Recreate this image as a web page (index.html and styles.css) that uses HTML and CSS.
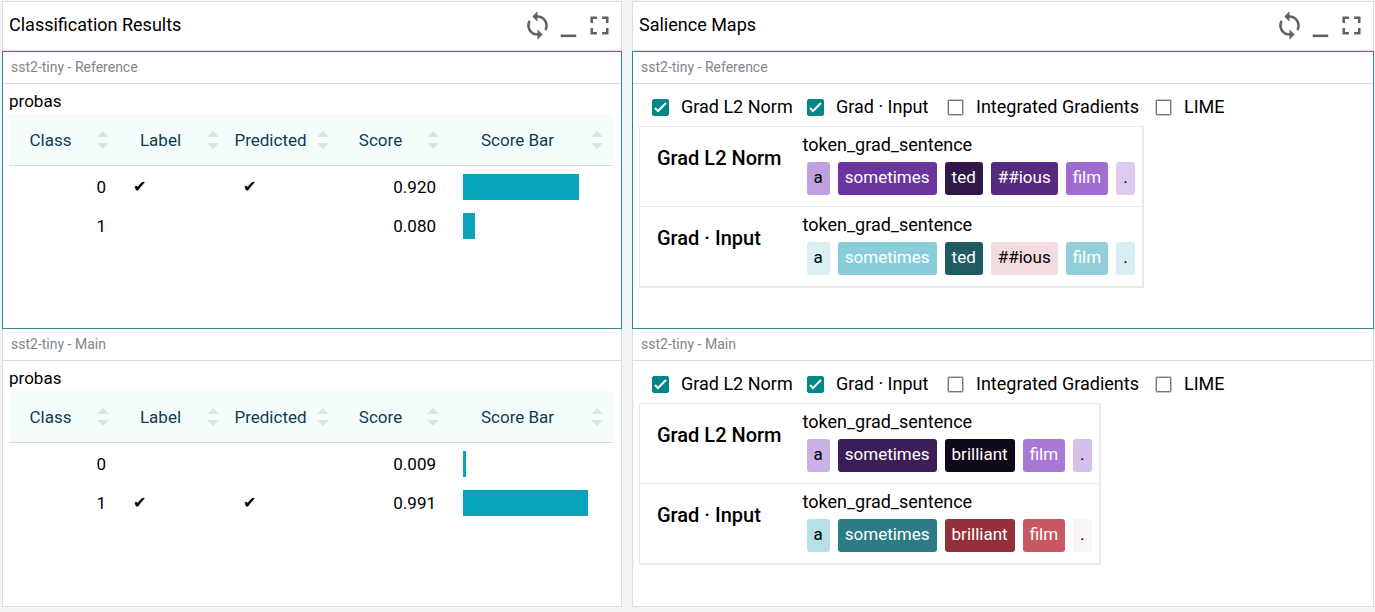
FILE: index.html
```html
<!DOCTYPE html>
<html lang="en">
<head>
<meta charset="utf-8">
<title>Classification Results and Salience Maps</title>
<link rel="stylesheet" href="styles.css">
</head>
<body>
<svg class="defs" aria-hidden="true">
  <symbol id="sync" viewBox="0 0 24 24"><path d="M12 4V1L8 5l4 4V6c3.31 0 6 2.69 6 6 0 1.01-.25 1.97-.7 2.8l1.46 1.46C19.54 15.03 20 13.57 20 12c0-4.42-3.58-8-8-8zm0 14c-3.31 0-6-2.69-6-6 0-1.01.25-1.97.7-2.8L5.24 7.74C4.46 8.97 4 10.43 4 12c0 4.42 3.58 8 8 8v3l4-4-4-4v3z"/></symbol>
  <symbol id="minimize" viewBox="0 0 24 24"><path d="M6 19h12v2H6z"/></symbol>
  <symbol id="fullscreen" viewBox="0 0 24 24"><path d="M7 14H5v5h5v-2H7v-3zm-2-4h2V7h3V5H5v5zm12 7h-3v2h5v-5h-2v3zM14 5v2h3v3h2V5h-5z"/></symbol>
  <symbol id="sort" viewBox="0 0 12 18"><path d="M6 0l6 6H0zM0 12h12l-6 6z"/></symbol>
</svg>
<main class="modules">
  <section class="module">
    <header class="module-header">
      <h2 class="module-title">Classification Results</h2>
      <div class="actions">
        <button class="icon-button" type="button" aria-label="Sync"><svg class="icon"><use href="#sync"/></svg></button>
        <button class="icon-button" type="button" aria-label="Minimize"><svg class="icon"><use href="#minimize"/></svg></button>
        <button class="icon-button" type="button" aria-label="Full screen"><svg class="icon"><use href="#fullscreen"/></svg></button>
      </div>
    </header>
    <div class="pane pane-selected">
      <h3 class="pane-title">sst2-tiny - Reference</h3>
      <div class="results">
        <div class="field-name">probas</div>
        <table class="scores">
          <thead><tr>
            <th><div class="head">Class<svg class="sort"><use href="#sort"/></svg></div></th>
            <th><div class="head">Label<svg class="sort"><use href="#sort"/></svg></div></th>
            <th><div class="head">Predicted<svg class="sort"><use href="#sort"/></svg></div></th>
            <th><div class="head">Score<svg class="sort"><use href="#sort"/></svg></div></th>
            <th class="bar-column"><div class="head">Score Bar<svg class="sort"><use href="#sort"/></svg></div></th>
          </tr></thead>
          <tbody>
            <tr><td class="number">0</td><td class="tick">✔</td><td class="tick">✔</td><td class="number">0.920</td><td><div class="bar" style="width: 116px"></div></td></tr>
            <tr><td class="number">1</td><td></td><td></td><td class="number">0.080</td><td><div class="bar" style="width: 12px"></div></td></tr>
          </tbody>
        </table>
      </div>
    </div>
    <div class="pane">
      <h3 class="pane-title">sst2-tiny - Main</h3>
      <div class="results">
        <div class="field-name">probas</div>
        <table class="scores">
          <thead><tr>
            <th><div class="head">Class<svg class="sort"><use href="#sort"/></svg></div></th>
            <th><div class="head">Label<svg class="sort"><use href="#sort"/></svg></div></th>
            <th><div class="head">Predicted<svg class="sort"><use href="#sort"/></svg></div></th>
            <th><div class="head">Score<svg class="sort"><use href="#sort"/></svg></div></th>
            <th class="bar-column"><div class="head">Score Bar<svg class="sort"><use href="#sort"/></svg></div></th>
          </tr></thead>
          <tbody>
            <tr><td class="number">0</td><td></td><td></td><td class="number">0.009</td><td><div class="bar" style="width: 3px"></div></td></tr>
            <tr><td class="number">1</td><td class="tick">✔</td><td class="tick">✔</td><td class="number">0.991</td><td><div class="bar" style="width: 125px"></div></td></tr>
          </tbody>
        </table>
      </div>
    </div>
  </section>

  <section class="module">
    <header class="module-header">
      <h2 class="module-title">Salience Maps</h2>
      <div class="actions">
        <button class="icon-button" type="button" aria-label="Sync"><svg class="icon"><use href="#sync"/></svg></button>
        <button class="icon-button" type="button" aria-label="Minimize"><svg class="icon"><use href="#minimize"/></svg></button>
        <button class="icon-button" type="button" aria-label="Full screen"><svg class="icon"><use href="#fullscreen"/></svg></button>
      </div>
    </header>
    <div class="pane pane-selected">
      <h3 class="pane-title">sst2-tiny - Reference</h3>
      <div class="salience">
        <div class="methods">
          <label class="method"><span class="check"><input class="box" type="checkbox" checked><svg class="mark" viewBox="0 0 17 17"><path d="M3 9l3 3 8-8"/></svg></span>Grad L2 Norm</label>
          <label class="method"><span class="check"><input class="box" type="checkbox" checked><svg class="mark" viewBox="0 0 17 17"><path d="M3 9l3 3 8-8"/></svg></span>Grad · Input</label>
          <label class="method"><span class="check"><input class="box" type="checkbox"></span>Integrated Gradients</label>
          <label class="method"><span class="check"><input class="box" type="checkbox"></span>LIME</label>
        </div>
        <table class="maps">
          <tr><th class="map-name" scope="row">Grad L2 Norm</th><td class="map">
            <div class="token-field">token_grad_sentence</div>
            <div class="tokens"><span class="token lilac">a</span><span class="token violet">sometimes</span><span class="token aubergine">ted</span><span class="token indigo">##ious</span><span class="token orchid">film</span><span class="token mauve">.</span></div>
          </td></tr>
          <tr><th class="map-name" scope="row">Grad · Input</th><td class="map">
            <div class="token-field">token_grad_sentence</div>
            <div class="tokens"><span class="token ice">a</span><span class="token aqua">sometimes</span><span class="token deep-teal">ted</span><span class="token blush">##ious</span><span class="token light-aqua">film</span><span class="token frost">.</span></div>
          </td></tr>
        </table>
      </div>
    </div>
    <div class="pane">
      <h3 class="pane-title">sst2-tiny - Main</h3>
      <div class="salience">
        <div class="methods">
          <label class="method"><span class="check"><input class="box" type="checkbox" checked><svg class="mark" viewBox="0 0 17 17"><path d="M3 9l3 3 8-8"/></svg></span>Grad L2 Norm</label>
          <label class="method"><span class="check"><input class="box" type="checkbox" checked><svg class="mark" viewBox="0 0 17 17"><path d="M3 9l3 3 8-8"/></svg></span>Grad · Input</label>
          <label class="method"><span class="check"><input class="box" type="checkbox"></span>Integrated Gradients</label>
          <label class="method"><span class="check"><input class="box" type="checkbox"></span>LIME</label>
        </div>
        <table class="maps">
          <tr><th class="map-name" scope="row">Grad L2 Norm</th><td class="map">
            <div class="token-field">token_grad_sentence</div>
            <div class="tokens"><span class="token lavender">a</span><span class="token plum">sometimes</span><span class="token midnight">brilliant</span><span class="token amethyst">film</span><span class="token thistle">.</span></div>
          </td></tr>
          <tr><th class="map-name" scope="row">Grad · Input</th><td class="map">
            <div class="token-field">token_grad_sentence</div>
            <div class="tokens"><span class="token sky">a</span><span class="token teal">sometimes</span><span class="token crimson">brilliant</span><span class="token rose">film</span><span class="token petal">.</span></div>
          </td></tr>
        </table>
      </div>
    </div>
  </section>
</main>
</body>
</html>
```
FILE: styles.css
```css
* { box-sizing: border-box; }
body {
  margin: 0;
  background: #f1f3f4;
  color: #000;
  font: 17px/24px Roboto, "Liberation Sans", sans-serif;
}
.defs { display: none; }
.modules {
  display: grid;
  grid-template-columns: 620fr 742fr;
  gap: 10px;
  min-height: 100vh;
  padding: 1px 1px 5px 2px;
}
.module { display: grid; grid-template-rows: 50px 1fr 1fr; min-width: 0; }
.module-header {
  display: flex;
  align-items: center;
  justify-content: space-between;
  padding: 0 6px 2px;
  background: #fff;
  border: 1px solid #dadce0;
}
.module-title { margin: 0; font-size: 18px; font-weight: 400; }
.actions { display: flex; }
.icon-button { display: flex; padding: 0; border: 0; background: none; color: #5f6368; }
.icon { width: 31px; height: 31px; fill: currentColor; }

.pane {
  min-width: 0;
  background: #fff;
  border: 1px solid #dadce0;
  border-top: 0;
}
.pane-selected { border: 1px solid #2b8c92; }
.pane-title {
  margin: 0;
  height: 32px;
  padding: 0 8px;
  border-bottom: 1px solid #dadce0;
  color: #80868b;
  font-size: 14px;
  font-weight: 400;
  line-height: 31px;
}

.results { padding: 5px 8px 0 6px; }
.field-name { height: 25px; }
.scores { width: 100%; border-collapse: separate; border-spacing: 0; table-layout: fixed; }
.scores th {
  width: 110px;
  height: 52px;
  padding: 0 10px 0 0;
  background: #f4fdfc;
  border-bottom: 1px solid #dadce0;
  color: #0d3c55;
  font-weight: 400;
}
.scores .bar-column { width: auto; }
.head { display: grid; grid-template-columns: 1fr 12px; column-gap: 5px; align-items: center; }
.sort { width: 12px; height: 18px; fill: #dfe3e3; }
.scores td { height: 39px; padding: 8px 13px 5px 14px; line-height: 26px; }
.number { text-align: right; }
.tick { font-family: "DejaVu Sans", sans-serif; font-size: 16px; }
.bar { height: 26px; background: #07a3ba; }

.salience { padding: 9px 6px 0; }
.methods {
  display: grid;
  grid-template-columns: 155px 140px 208px auto;
  padding: 2px 13px 7px;
  font-size: 18px;
}
.method { display: flex; align-items: center; gap: 12px; white-space: nowrap; }
.check { display: grid; }
.box, .mark { grid-area: 1 / 1; width: 17px; height: 17px; }
.box {
  appearance: none;
  margin: 0;
  background: #fff;
  border: 1px solid #c8c8c8;
  border-radius: 2px;
  box-shadow: inset 0 0 0 1px #757575;
}
.box:checked { background: #018786; border-color: #018786; box-shadow: none; }
.mark { fill: none; stroke: #fff; stroke-width: 2; pointer-events: none; }

.maps {
  border-collapse: separate;
  border-spacing: 0;
  border: 1px solid #e8eaed;
  border-width: 1px 2px 2px 1px;
}
.maps tr + tr > * { border-top: 1px solid #e8eaed; }
.map-name {
  padding: 19px 21px 0 17px;
  font-size: 20px;
  font-weight: 500;
  text-align: left;
  vertical-align: top;
}
.map { height: 79px; padding: 7px 7px 11px 0; }
.token-field { height: 28px; font-size: 18px; line-height: 22px; }
.tokens { display: flex; gap: 8px; padding-left: 4px; }
.token { height: 33px; padding: 0 7px; border-radius: 3px; line-height: 31px; }
.lilac { background: #bfa1df; }
.violet { background: #6a359c; color: #fff; }
.aubergine { background: #301747; color: #fff; }
.indigo { background: #562a7f; color: #fff; }
.orchid { background: #9f6dd0; color: #fff; }
.mauve { background: #dccbee; }
.ice { background: #dceff3; }
.aqua { background: #89cdd8; color: #fff; }
.deep-teal { background: #215b62; color: #fff; }
.blush { background: #f2dce0; }
.light-aqua { background: #92cfda; color: #fff; }
.frost { background: #d9eef2; }
.lavender { background: #cab0e6; }
.plum { background: #3b1d57; color: #fff; }
.midnight { background: #110819; color: #fff; }
.amethyst { background: #a779d4; color: #fff; }
.thistle { background: #d4c0e9; }
.sky { background: #b5e0e7; }
.teal { background: #2d7b86; color: #fff; }
.crimson { background: #94303b; color: #fff; }
.rose { background: #c95763; color: #fff; }
.petal { background: #faf4f5; }
```
